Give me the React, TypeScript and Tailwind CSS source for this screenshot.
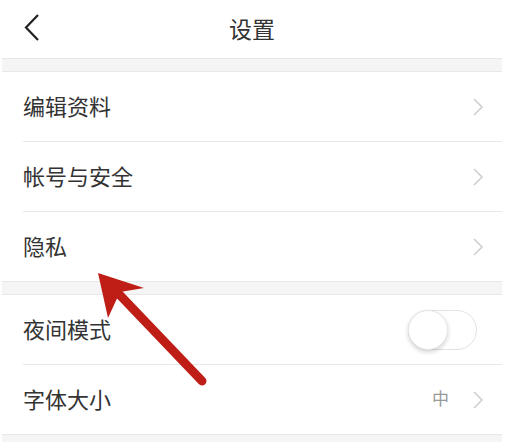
import React from 'react';

const font = { fontFamily: '"Noto Sans CJK SC", "Noto Sans", sans-serif' };

const Chevron: React.FC = () => (
  <svg width="12" height="20" viewBox="0 0 12 20" className="shrink-0">
    <path d="M2 2 L10 10 L2 18" fill="none" stroke="#cfcfcf" strokeWidth="1.6" />
  </svg>
);

const Row: React.FC<{ label: string; last?: boolean; children?: React.ReactNode }> = ({ label, last, children }) => (
  <div className="pl-[21px]">
    <div
      className={`flex items-center justify-between pr-[18px] ${
        last ? 'h-[69px]' : 'h-[70px] border-b border-[#e8e8e8]'
      }`}
    >
      <span className="mb-[4px] text-[22px] text-[#333] leading-none">{label}</span>
      {children ?? <Chevron />}
    </div>
  </div>
);

const Band: React.FC<{ top?: boolean; h: string }> = ({ top, h }) => (
  <div className={`${h} bg-[#f5f5f5] border-b border-[#e8e8e8] ${top ? 'border-t' : ''}`} />
);

const App: React.FC = () => {
  return (
    <div className="relative w-[505px] h-[442px] overflow-hidden bg-white pl-[2px] pr-[3px]" style={font}>
      <div className="relative h-[59px] flex items-center justify-center border-b border-[#e6e6e6]">
        <svg width="18" height="30" viewBox="0 0 18 30" className="absolute left-[21px] top-[13px]">
          <path d="M15 2 L3 14.5 L15 27" fill="none" stroke="#222" strokeWidth="2.2" />
        </svg>
        <span className="mb-[2px] text-[23px] text-[#333] leading-none">设置</span>
      </div>
      <Band h="h-[13px]" />

      <Row label="编辑资料" />
      <Row label="帐号与安全" />
      <Row label="隐私" last />

      <div className="h-[14px] bg-[#f5f5f5] border-y border-[#e8e8e8]" />

      <Row label="夜间模式">
        <div className="mr-[7px] flex h-[40px] w-[69px] items-center rounded-full border border-[#e3e3e3] bg-white">
          <div className="-ml-px h-[40px] w-[40px] rounded-full border border-[#e6e6e6] bg-white shadow-[0_2px_4px_rgba(0,0,0,0.18)]" />
        </div>
      </Row>
      <Row label="字体大小" last>
        <div className="flex items-center gap-[23px]">
          <span className="mb-[4px] text-[17px] text-[#999] leading-none">中</span>
          <Chevron />
        </div>
      </Row>

      <Band top h="h-[20px]" />

      <svg className="absolute left-0 top-0 pointer-events-none" width="505" height="442" viewBox="0 0 505 442">
        <line x1="116" y1="291" x2="202" y2="381" stroke="#bf1e17" strokeWidth="9" strokeLinecap="round" />
        <polygon points="98,273 144,288 120,292 108,318" fill="#bf1e17" />
      </svg>
    </div>
  );
};

export default App;
